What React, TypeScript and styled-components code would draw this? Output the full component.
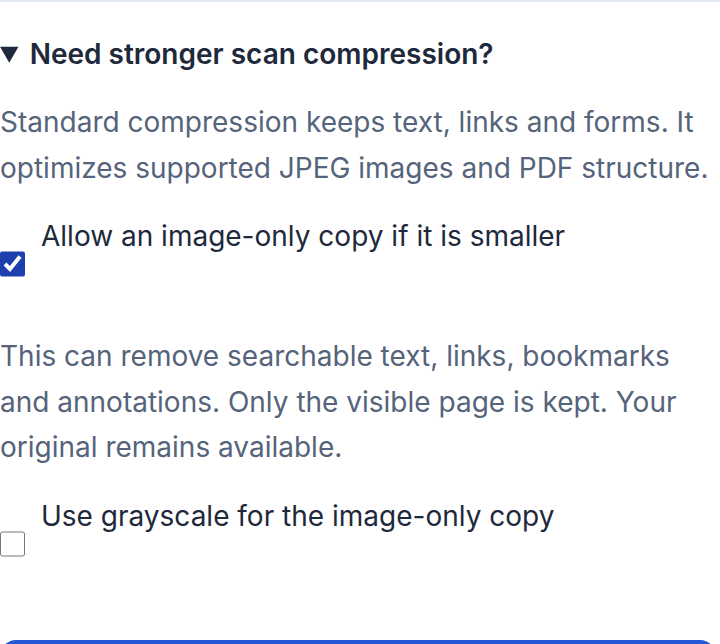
import * as React from 'react'
import styled, { createGlobalStyle } from 'styled-components'

const GlobalStyle = createGlobalStyle`
  html, body {
    margin: 0;
    padding: 0;
    background: #fff;
  }
  body {
    font-family: Inter, "Noto Sans", sans-serif;
    -webkit-font-smoothing: antialiased;
  }
`

const Panel = styled.details`
  border-top: 2px solid #e2e8f0;
  padding: 34px 4px 0 0;
  width: 720px;
  box-sizing: border-box;
`

const Summary = styled.summary`
  font-size: 28px;
  font-weight: 600;
  color: #1e293b;
  line-height: 36px;
  cursor: pointer;
`

const Body = styled.div`
  padding-top: 28px;
  display: flex;
  flex-direction: column;
`

const Note = styled.p`
  margin: 0;
  font-size: 28px;
  line-height: 45.5px;
  color: #55637b;
`

const OptionRow = styled.label`
  display: flex;
  gap: 16px;
  margin: 30px 0 27px;
`

const Check = styled.input`
  margin: 0;
  width: 25px;
  height: 86px;
  flex: none;
  accent-color: #1e40af;
`

const OptionText = styled.span`
  font-size: 28px;
  line-height: 30px;
  color: #1e293b;
`

const PrimaryButton = styled.button`
  margin-top: 26px;
  width: 100%;
  height: 80px;
  border: none;
  border-radius: 16px;
  background: #2457d6;
  color: #fff;
  font: 600 26px Inter, sans-serif;
`

export default function App() {
  const [imageOnly, setImageOnly] = React.useState(true)
  const [grayscale, setGrayscale] = React.useState(false)

  return (
    <>
      <GlobalStyle />
      <Panel open>
        <Summary>Need stronger scan compression?</Summary>
        <Body>
          <Note>
            Standard compression keeps text, links and forms. It optimizes supported JPEG images and PDF structure.
          </Note>
          <OptionRow>
            <Check
              type="checkbox"
              checked={imageOnly}
              onChange={e => setImageOnly(e.target.checked)}
            />
            <OptionText>Allow an image-only copy if it is smaller</OptionText>
          </OptionRow>
          <Note>
            This can remove searchable text, links, bookmarks and annotations. Only the visible page is kept. Your original remains available.
          </Note>
          <OptionRow>
            <Check
              type="checkbox"
              checked={grayscale}
              onChange={e => setGrayscale(e.target.checked)}
            />
            <OptionText>Use grayscale for the image-only copy</OptionText>
          </OptionRow>
        </Body>
        <PrimaryButton type="button">Compress PDF</PrimaryButton>
      </Panel>
    </>
  )
}
